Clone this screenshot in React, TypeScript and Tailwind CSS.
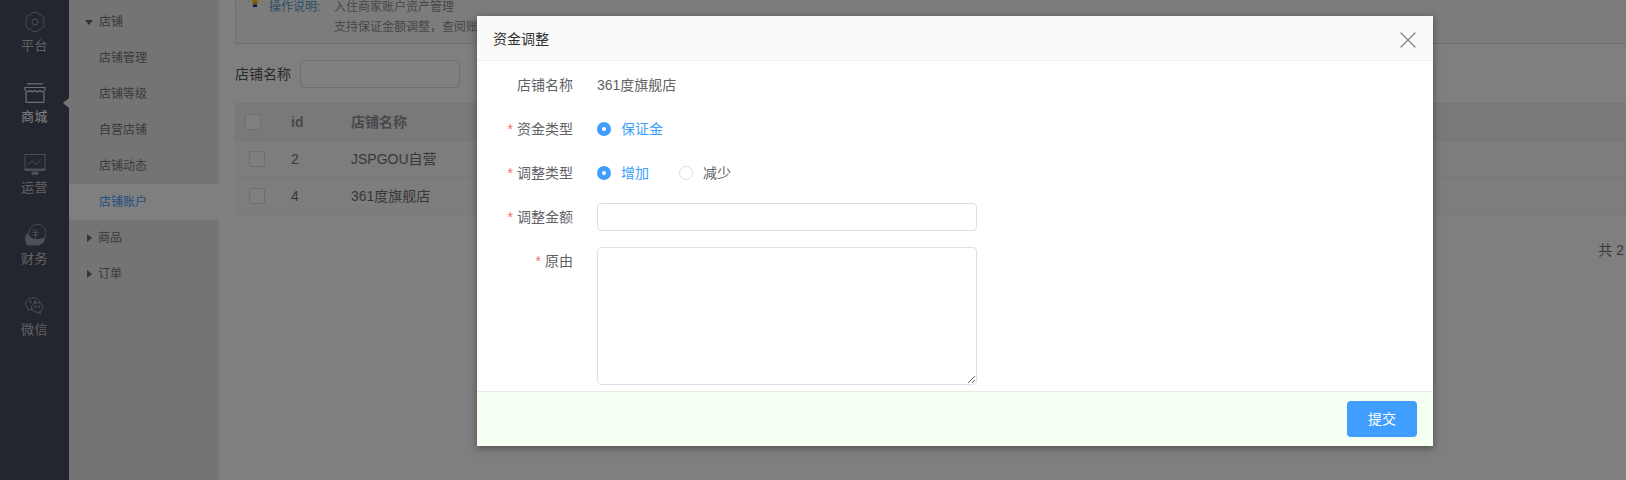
import React from 'react';
import { X } from 'lucide-react';

const GearIcon = () => (
  <svg width="22" height="22" viewBox="0 0 22 22" fill="none" stroke="currentColor" strokeWidth="1">
    <path d="M19.500 11A5 5 0 0 1 15.250 18.360A5 5 0 0 1 6.750 18.360A5 5 0 0 1 2.500 11A5 5 0 0 1 6.750 3.640A5 5 0 0 1 15.250 3.640A5 5 0 0 1 19.500 11Z" />
    <circle cx="11" cy="11" r="3" />
  </svg>
);

const ShopIcon = () => (
  <svg width="22" height="20" viewBox="0 0 22 20" fill="none" stroke="currentColor" strokeWidth="1.2">
    <path d="M3 .8h16" />
    <path d="M1 4.500h20v2.500c-1.500 2-3.500 2-5 .5-1.500 1.500-3.500 1.500-5 0-1.500 1.500-3.500 1.500-5 0-1.500 1.500-3.500 1.500-5-.5z" />
    <path d="M2 9v9.500a.8.8 0 0 0 .8.8h16.400a.8.8 0 0 0 .8-.8V9" />
  </svg>
);

const MonitorIcon = () => (
  <svg width="22" height="21" viewBox="0 0 22 21" fill="none" stroke="currentColor" strokeWidth="1">
    <rect x="1" y=".5" width="20" height="15" />
    <path d="M4 11l4-4 4 3.500 5-5" />
    <path d="M1 15h20v1.500H1zM8 18h6v2.500H8z" fill="currentColor" />
  </svg>
);

const CoinHandIcon = () => (
  <svg width="22" height="22" viewBox="0 0 22 22" fill="none" stroke="currentColor">
    <path d="M5 9a8.500 8.500 0 1 1 15 5.500" strokeWidth="1" />
    <path d="M9 5l2.500 3L14 5M8.500 8.500h6M8.500 11h6M11.500 8v6" strokeWidth="1" />
    <path d="M1 15c0-3.500 1.500-5.500 3-6 1 2 2 4 5 5.500 3.500.8 7 .5 9-.2 2-.5 3-.3 3 .5 0 3-3 6.700-8 6.700H5C2.500 21.500 1 18 1 15z" fill="currentColor" stroke="none" />
  </svg>
);

const WechatIcon = () => (
  <svg width="19" height="19" viewBox="0 0 19 19" fill="none" stroke="currentColor" strokeWidth="1">
    <path d="M8 .8C3.800.8.700 3.500.700 6.900c0 1.900 1 3.500 2.500 4.600l-.5 2 2.300-1.200c.9.300 1.700.4 2.700.4" />
    <path d="M8 .8c3.400 0 6.400 2 7 5" />
    <ellipse cx="12.200" cy="10.500" rx="5.800" ry="4.800" />
    <path d="M15 15l.8 2.200-2.800-1.600" />
    <circle cx="5.500" cy="5" r=".8" fill="currentColor" />
    <circle cx="10" cy="5" r=".8" fill="currentColor" />
    <circle cx="10.200" cy="9.700" r=".7" fill="currentColor" />
    <circle cx="14.200" cy="9.700" r=".7" fill="currentColor" />
  </svg>
);

const BulbIcon = () => (
  <svg width="18" height="18" viewBox="0 0 18 18">
    <path d="M9 -4a6 6 0 0 1 3.600 10.800c-.8.700-1.100 1.500-1.200 2.700H6.600c-.1-1.200-.4-2-1.200-2.700A6 6 0 0 1 9-4z" fill="#ffd21f" />
    <rect x="6.800" y="9" width="4.400" height="2.500" fill="#f2a900" />
    <rect x="7" y="11.500" width="4" height="2.500" fill="#1f2fa8" />
    <path d="M1.500 4.500l-1.500.8M16.500 4.500l1.500.8M3 8l-1.500 1M15 8l1.500 1" stroke="#ffd21f" strokeWidth="1" />
  </svg>
);

const navItems = [
  { label: '平台', icon: <GearIcon />, active: false },
  { label: '商城', icon: <ShopIcon />, active: true },
  { label: '运营', icon: <MonitorIcon />, active: false },
  { label: '财务', icon: <CoinHandIcon />, active: false },
  { label: '微信', icon: <WechatIcon />, active: false },
];

const shopLinks = ['店铺管理', '店铺等级', '自营店铺', '店铺动态', '店铺账户'];

const rows = [
  { id: 2, name: 'JSPGOU自营' },
  { id: 4, name: '361度旗舰店' },
];

const Checkbox = () => <span className="block size-4 rounded-[2px] border border-[#dcdfe6] bg-white" />;

const Radio = ({ label, checked }: { label: string; checked?: boolean }) => (
  <span className="flex items-center gap-[10px]">
    {checked ? (
      <span className="flex size-[14px] items-center justify-center rounded-full bg-[#409eff]">
        <span className="size-1 rounded-full bg-white" />
      </span>
    ) : (
      <span className="size-[14px] rounded-full border border-[#dcdfe6] bg-white" />
    )}
    <span className={checked ? 'text-[#409eff]' : 'text-[#606266]'}>{label}</span>
  </span>
);

const FormRow = ({
  label,
  required,
  className,
  children,
}: {
  label: string;
  required?: boolean;
  className?: string;
  children: React.ReactNode;
}) => (
  <div className={`flex items-start gap-6 ${className ?? ''}`}>
    <label className="w-[96px] shrink-0 text-right text-[14px] leading-[28px] text-[#606266]">
      {required && <span className="mr-1 text-[#f56c6c]">*</span>}
      {label}
    </label>
    <div className="flex min-h-[28px] flex-1 items-center text-[14px] leading-[28px] text-[#606266]">{children}</div>
  </div>
);

export default function App() {
  return (
    <div className="relative flex h-[480px] w-[1626px] overflow-hidden bg-white font-['Liberation_Sans','Noto_Sans_CJK_SC',sans-serif]">
      {/* left icon nav */}
      <div className="flex w-[69px] shrink-0 flex-col bg-[#464b5e]">
        {navItems.map((item) => (
          <div key={item.label} className="relative flex h-[71px] flex-col items-center">
            <div
              className={`mt-[11px] flex h-[22px] items-center justify-center ${item.active ? 'text-[#e0e0e0]' : 'text-[#9a9ea8]'}`}
            >
              {item.icon}
            </div>
            <span
              className={`mt-[3px] text-[13px] leading-5 tracking-[0.5px] ${item.active ? 'text-white' : 'text-[#c4c4c4]'}`}
            >
              {item.label}
            </span>
            {item.active && (
              <span className="absolute right-0 top-[27px] border-y-[5px] border-r-[6px] border-y-transparent border-r-[#e8e8e8]" />
            )}
          </div>
        ))}
      </div>

      {/* sub nav */}
      <div className="w-[150px] shrink-0 bg-[#e8e8e8] pt-1 text-[12px] text-[#757575]">
        <div className="flex h-9 items-center pl-4">
          <span className="mr-[6px] border-x-4 border-t-[5px] border-x-transparent border-t-[#666]" />
          店铺
        </div>
        {shopLinks.map((link) => (
          <div
            key={link}
            className={`flex h-9 items-center pl-[30px] ${link === '店铺账户' ? 'bg-white text-[#409eff]' : ''}`}
          >
            {link}
          </div>
        ))}
        {['商品', '订单'].map((group) => (
          <div key={group} className="flex h-9 items-center pl-[18px]">
            <span className="mr-[6px] border-y-4 border-l-[5px] border-y-transparent border-l-[#666]" />
            {group}
          </div>
        ))}
      </div>

      {/* main content */}
      <div className="min-w-0 flex-1 pl-4 text-[14px] text-[#707070]">
        <div className="flex h-[44px] border-b border-l border-dotted border-[#ccc] bg-[#f8f8f8] pl-[10px] text-[12px] leading-5 text-[#909090]">
          <span className="-mt-[7px] h-[18px] w-[23px] shrink-0">
            <BulbIcon />
          </span>
          <span className="-mt-[3px] w-[65px] shrink-0 text-[#5a9fd0]">操作说明:</span>
          <div className="-mt-[3px]">
            <div>入住商家账户资产管理</div>
            <div>支持保证金额调整，查阅账户资金明细</div>
          </div>
        </div>
        <div className="mt-4 flex items-center">
          <span className="mr-[9px] text-[#555]">店铺名称</span>
          <span className="h-7 w-[160px] rounded-[4px] border border-[#dcdfe6] bg-white" />
        </div>
        <div className="mt-[15px]">
          <div className="flex h-[38px] items-center border-y border-[#ebeef5] bg-[#f2f2f2] font-bold text-[#909399]">
            <span className="ml-[10px] w-[46px]">
              <Checkbox />
            </span>
            <span className="w-[60px]">id</span>
            <span>店铺名称</span>
          </div>
          {rows.map((row) => (
            <div key={row.id} className="flex h-[37px] items-center border-b border-[#ebeef5] bg-[#fbfbfb]">
              <span className="ml-[14px] w-[42px]">
                <Checkbox />
              </span>
              <span className="w-[60px]">{row.id}</span>
              <span>{row.name}</span>
            </div>
          ))}
        </div>
        <div className="mt-[25px] pr-[2px] text-right text-[#707070]">共 2</div>
      </div>

      {/* dim layer */}
      <div className="absolute inset-0 bg-black/50" />

      {/* dialog */}
      <div className="absolute left-[477px] top-4 flex h-[430px] w-[956px] flex-col bg-white shadow-[0_2px_8px_rgba(0,0,0,0.4)]">
        <div className="flex h-[45px] shrink-0 items-center justify-between border-b border-[#ebeef5] bg-[#fafafa] pl-4 pr-[11px] pt-[3px]">
          <span className="text-[14px] text-[#303133]">资金调整</span>
          <X size={28} strokeWidth={1.1} className="text-[#808890]" />
        </div>
        <div className="flex flex-1 flex-col pt-[10px]">
          <FormRow label="店铺名称">361度旗舰店</FormRow>
          <FormRow label="资金类型" required className="mt-4">
            <Radio label="保证金" checked />
          </FormRow>
          <FormRow label="调整类型" required className="mt-4">
            <div className="flex gap-[30px]">
              <Radio label="增加" checked />
              <Radio label="减少" />
            </div>
          </FormRow>
          <FormRow label="调整金额" required className="mt-4">
            <input className="h-7 w-[380px] rounded-[4px] border border-[#dcdfe6] outline-none" />
          </FormRow>
          <FormRow label="原由" required className="mt-4">
            <textarea className="block h-[138px] w-[380px] rounded-[4px] border border-[#dfdfe9] outline-none" />
          </FormRow>
        </div>
        <div className="flex h-[55px] shrink-0 items-center justify-end border-t border-[#e4ece4] bg-[#f5fff2] pr-4">
          <button className="h-9 w-[70px] rounded-[4px] bg-[#409eff] text-[14px] text-white">提交</button>
        </div>
      </div>
    </div>
  );
}
